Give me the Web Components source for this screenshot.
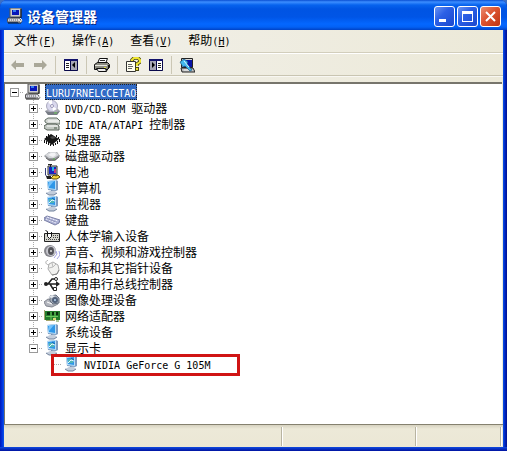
<!DOCTYPE html>
<html lang="zh-CN">
<head>
<meta charset="utf-8">
<title>设备管理器</title>
<style>
  body {
    margin: 0;
    background: #3c6fc4;
    color: #000;
    font: 12px/16px "Noto Sans CJK SC", sans-serif;
  }
</style>
</head>
<body>
<xp-window caption="设备管理器">
  <menu-bar slot="menu">
    <menu-entry key="F">文件</menu-entry>
    <menu-entry key="A">操作</menu-entry>
    <menu-entry key="V">查看</menu-entry>
    <menu-entry key="H">帮助</menu-entry>
  </menu-bar>
  <tool-bar slot="toolbar">
    <tool-group><tool-button icon="back" label="后退"></tool-button><tool-button icon="forward" label="前进"></tool-button></tool-group>
    <tool-group><tool-button icon="panel" label="显示/隐藏控制台树"></tool-button></tool-group>
    <tool-group><tool-button icon="printer" label="打印"></tool-button></tool-group>
    <tool-group><tool-button icon="help" label="帮助"></tool-button><tool-button icon="pane" label="操作窗格"></tool-button></tool-group>
    <tool-group><tool-button icon="scan" label="扫描检测硬件改动"></tool-button></tool-group>
  </tool-bar>
  <tree-item icon="computer" label="LURU7RNELCCETAO" open root selected>
    <tree-item icon="disc" label="DVD/CD-ROM 驱动器" branch></tree-item>
    <tree-item icon="ide" label="IDE ATA/ATAPI 控制器" branch></tree-item>
    <tree-item icon="cpu" label="处理器" branch></tree-item>
    <tree-item icon="disk" label="磁盘驱动器" branch></tree-item>
    <tree-item icon="battery" label="电池" branch></tree-item>
    <tree-item icon="monitor" label="计算机" branch></tree-item>
    <tree-item icon="display" label="监视器" branch></tree-item>
    <tree-item icon="keyboard" label="键盘" branch></tree-item>
    <tree-item icon="hid" label="人体学输入设备" branch></tree-item>
    <tree-item icon="speaker" label="声音、视频和游戏控制器" branch></tree-item>
    <tree-item icon="mouse" label="鼠标和其它指针设备" branch></tree-item>
    <tree-item icon="usb" label="通用串行总线控制器" branch></tree-item>
    <tree-item icon="camera" label="图像处理设备" branch></tree-item>
    <tree-item icon="network" label="网络适配器" branch></tree-item>
    <tree-item icon="monitor" label="系统设备" branch></tree-item>
    <tree-item icon="display" label="显示卡" open last>
      <tree-item icon="display" label="NVIDIA GeForce G 105M" last marked></tree-item>
    </tree-item>
  </tree-item>
  <status-bar slot="status"></status-bar>
</xp-window>

<script>
const SCREEN = `<path d="M3 1l9-1 2 1v9l-2 1-8-1z" fill="#7f9cc0"/><path d="M3 1l9-1v10l-8-1z" fill="#b5defa"/><path d="M4 2l7-1v8l-6-1z" fill="#2f97e8"/>`;
const STAND = `<path d="M7 10l4 1v2H7z" fill="#6c88ac"/><path d="M2 13l4-2h5l2 2-3 2H5z" fill="#c3cddb"/><path d="M2 13l3 2h5l3-2" stroke="#71819b" fill="none"/>`;

const ICONS = {
  computer: `<path d="M3 0h11v9H3z" fill="#ccc" stroke="#555"/><path d="M5 2h7v5H5z" fill="#0816b8"/><path d="M6 2h3v2H6z" fill="#347cf0"/><path d="M14 1v9H4" stroke="#111" fill="none"/><path d="M1 10h12l2 4H0z" fill="#d7d7df" stroke="#444"/><path d="M2 12h9" stroke="#666" stroke-dasharray="1 1"/><path d="M11 11l3 3M13 10l2 2-2 3-2-1" stroke="#e8e8e8" fill="none"/><path d="M1 15h13" stroke="#111"/>`,
  disc: `<path d="M1 11l5-3h7l3 3-3 4H4z" fill="#a8aab2"/><path d="M1 11l4 1h8l3-1-3 4H4z" fill="#777b84"/><circle cx="8" cy="6" r="5.500" fill="#d9d8ed" stroke="#aaa9bc"/><path d="M8 6L4 2a6 6 0 0 1 4-2zM8 6l5 3-4 2z" fill="#fff"/><circle cx="8" cy="6" r="1.500" fill="#fff" stroke="#9a96b8"/><path d="M10 13h3" stroke="#6fd15b"/>`,
  ide: `<path d="M4 2h9l3 3v3H4L1 6V4z" fill="#d4d8d4" stroke="#657067"/><path d="M4 5h11" stroke="#fff"/><path d="M3 8h9l3 2v4H3l-3-2v-2z" fill="#c2c8c2" stroke="#566057"/><path d="M3 10h11" stroke="#fff"/><path d="M10 12h3" stroke="#4a5b4a"/>`,
  cpu: `<path d="M7 2l8 5-7 6-8-6z" fill="#161616"/><path d="M6 5l3-1 3 2-4 1z" fill="#484848"/><path d="M0.500 8v3M2.500 9v3M4.500 10v3M6.500 12v2M9.500 12v2M11.500 11v2M13.500 9v3M15.500 7v3M2.500 4v2M4.500 2v3M12.500 3v2M14.500 5v2" stroke="#111"/>`,
  disk: `<path d="M0 8l5-4h8l3 4-5 5H5z" fill="#999ba0"/><path d="M1 7l5-3h6l3 3-5 3H5z" fill="#d5d7da"/><path d="M4 7l3-2h4l1 2-3 2z" fill="#f3f3f5"/><path d="M2 10l3 2h6l4-3" stroke="#666" fill="none"/><path d="M9 11h2" stroke="#56ae4b"/>`,
  battery: `<path d="M4 2h9v9H4z" fill="#c8c8cc" stroke="#333"/><path d="M5 3h7v7H5z" fill="#1426c0"/><path d="M8 3h2v4H8z" fill="#24b4e4"/><path d="M10 5h2v4h-2z" fill="#c03a7c"/><path d="M1.500 4v7l3 3h3" stroke="#343d79" fill="none"/><path d="M6.500 0v3M4 .5h4" stroke="#262626"/><path d="M7 14l3-3 2 1 2-1 2 2-3 2H9z" fill="#f4d43a" stroke="#5b4b06"/><path d="M2 12h5v3H3z" fill="#222"/>`,
  monitor: SCREEN + STAND + `<path d="M5 2l5-1-5 6z" fill="#74c2fb"/>`,
  display: SCREEN + STAND + `<path d="M5 3h5v4H5z" fill="#4fb5b5"/><path d="M5 7l3-3 3 1" stroke="#e8f8ff" fill="none"/><path d="M8 2l3 2" stroke="#1764b8"/>`,
  keyboard: `<path d="M0 6l3-2 13 4-1 3-4 2L0 8z" fill="#abb0d4" stroke="#7b80a6"/><path d="M3 5l11 4M2 7l10 4" stroke="#f4f5ff" stroke-dasharray="2 1"/><path d="M1 6l11 4" stroke="#7e83a7" stroke-dasharray="1 1"/>`,
  hid: `<path d="M.5 5.500h15v8H.5z" fill="#d4d4cc" stroke="#222"/><path d="M9 7.500h6M9 9.500h6M2 11.500h13" stroke="#444" stroke-dasharray="1 1"/><path d="M3.500 5.500h4v3l-2 2-2-2z" fill="#fff" stroke="#111"/><path d="M3.500 6V3.500l-2-1M7.500 4v3" stroke="#111" fill="none"/>`,
  speaker: `<ellipse cx="6" cy="7" rx="6" ry="6" fill="#85858b"/><ellipse cx="7" cy="7" rx="5" ry="5" fill="#c5c5cc"/><ellipse cx="7" cy="7" rx="3" ry="4" fill="#55555b"/><circle cx="7" cy="7" r="1" fill="#ddd"/><path d="M10 14l3-4-1-3M13 15l3-4-1-4" stroke="#a5a5e3" fill="none"/>`,
  mouse: `<path d="M4 0c-4 2-2 5 2 5" stroke="#aaa" fill="none"/><path d="M5 4l4-2 5 3 1 5-2 4-5 1-4-6z" fill="#f2f2f0" stroke="#aaa"/><path d="M5 8l4-1 3-3M8 3l1 4" stroke="#bbb" fill="none"/><path d="M8 15l5-1 2-4" stroke="#888" fill="none"/>`,
  usb: `<path d="M1 8h13M4 8l4-5h3M6 8l3 5h2" stroke="#222" stroke-width="1.500" fill="none"/><circle cx="2" cy="8" r="2" fill="#222"/><circle cx="12" cy="3" r="1.500" fill="#fff" stroke="#222"/><path d="M9.500 11.500h3v3h-3z" fill="#fff" stroke="#222"/><path d="M12 5l4 3-4 3z" fill="#222"/>`,
  camera: `<path d="M0 10l4-3 8 2 2 3-6 3-6-1z" fill="#b2b5bd" stroke="#81858f"/><path d="M6 4l6-1 3 3v5l-6 1-3-3z" fill="#a5acb7" stroke="#667080"/><path d="M4 5l4-2 3 1-3 2z" fill="#e3e7ec"/><circle cx="11" cy="8" r="3" fill="#52627b"/><circle cx="11" cy="8" r="1" fill="#b8d5ef"/><path d="M3 10l5 2" stroke="#fff"/>`,
  network: `<path d="M1 3h15v9H1z" fill="#237b2c"/><path d="M.5 2v10M2 12.500h9" stroke="#a4a46b" fill="none"/><path d="M3 4h3v3H3zM8 4h2v3H8zM12 4h2v3h-2z" fill="#092f0e"/><path d="M2 8.500h12M7 4v8M11 4v8" stroke="#68c95d"/><path d="M9 10h3v2H9z" fill="#d8d87a"/><path d="M12 13h3" stroke="#5a8e37"/>`,
  back: `<path d="M2 8l5-5v3h8v4H7v3z" fill="#aaa899"/>`,
  forward: `<path d="M15 8l-5-5v3H2v4h8v3z" fill="#aaa899"/>`,
  panel: `<path d="M1 2h14v12H1z" fill="#a6a6b5"/><path d="M2 4h5v9H2z" fill="#fff"/><path d="M1.500 2.500h13v11h-13zM7.500 3v10" stroke="#08084a" fill="none"/><path d="M1 3h14" stroke="#12126b" stroke-width="2"/><path d="M3 6.500h3M3 8.500h3M3 10.500h3" stroke="#222"/><path d="M12 5v6L9 8z" fill="#000"/>`,
  pane: `<path d="M1 2h14v12H1z" fill="#a6a6b5"/><path d="M9 4h5v9H9z" fill="#fff"/><path d="M1.500 2.500h13v11h-13zM8.500 3v10" stroke="#08084a" fill="none"/><path d="M1 3h14" stroke="#12126b" stroke-width="2"/><path d="M10 6.500h3M10 8.500h3M10 10.500h3" stroke="#222"/><path d="M4 5v6l3-3z" fill="#000"/>`,
  printer: `<path d="M5.500 1.500h8l-2 5h-8z" fill="#fff" stroke="#111"/><path d="M6 3.500h5M5 5.500h5" stroke="#333"/><path d="M.5 7.500l3-2h10l2 2v3l-2 2H.5z" fill="#8c8c82" stroke="#111"/><path d="M1 8.500h12" stroke="#e8e8e0"/><path d="M2.500 11.500h9l1 3h-8z" fill="#eee" stroke="#111"/><path d="M14.500 8v3l-2 3" stroke="#111" fill="none"/><path d="M10 10.500h2" stroke="#dfdf48"/>`,
  help: `<path d="M1.500 4.500h9v10h-9z" fill="#fffff1" stroke="#333"/><path d="M3 7.500h4M3 9.500h5M3 11.500h4" stroke="#666"/><path d="M7 4V3l2-2h4l2 2v2l-3 2v2" stroke="#4a4812" stroke-width="3.500" fill="none"/><path d="M7 4V3l2-2h4l2 2v2l-3 2v2" stroke="#eee532" stroke-width="2" fill="none"/><path d="M10 10h4v4h-4z" fill="#4a4812"/><path d="M11 11h2v2h-2z" fill="#eee532"/>`,
  scan: `<path d="M2.500 1.500h11v9h-11z" fill="#d8d8d8" stroke="#222"/><path d="M4 3h9v7H4z" fill="#0712a5"/><path d="M2 11h12l2 4H3z" fill="#c4c4c4" stroke="#222"/><path d="M5 13h8" stroke="#eee"/><path d="M1 5l4-3 4 3-1 2 5 6-2 1-5-5-2 1z" fill="#42b8ed" stroke="#17557e" stroke-width=".7"/><path d="M5 4l5 6" stroke="#d9f8ff"/>`,
};

// Latin runs are set in a 6px wide face, half of a Chinese character
const LATIN_CSS = `.latin { font: 10px/16px "DejaVu Sans Mono", monospace; white-space: pre; }`;

function mixed(text) {
  return text.replace(/[ -~]+/g, run => `<span class="latin">${run}</span>`);
}

function svg(name) {
  return `<svg width="16" height="16" viewBox="0 0 16 16" aria-hidden="true">${ICONS[name] || ""}</svg>`;
}

class XpWindow extends HTMLElement {
  connectedCallback() {
    this.attachShadow({ mode: "open" }).innerHTML = `
    <style>
      :host {
        display: flex; flex-direction: column; box-sizing: border-box; min-height: 100vh;
        padding: 0 4px 4px; border-radius: 7px 7px 0 0; overflow: hidden;
        background:
          linear-gradient(#0f4be0, #0012a0) 0 100% / 100% 4px no-repeat,
          linear-gradient(90deg, #0019b8, #0030dc 2px, #0a55ea 4px, transparent 4px) no-repeat,
          linear-gradient(270deg, #00138c, #0024c0 2px, #0a55ea 4px, transparent 4px) no-repeat #0054e3;
      }
      header {
        display: flex; align-items: center; box-sizing: border-box; height: 30px;
        margin: 0 -4px; padding: 2px 6px 0 7px;
        background: linear-gradient(#0a4fd2, #3c8eff 2px, #0763ee 5px, #0054e3 9px, #0055e6 17px, #0467ff 24px, #0361f5 27px, #0042c5 30px);
      }
      h1 { flex: 1; margin: 0 0 0 4px; color: #fff; font-size: 14px; line-height: 20px; font-weight: 700; text-shadow: 1px 1px #0a2a84; }
      .buttons { display: flex; gap: 2px; }
      button {
        width: 21px; height: 21px; padding: 0; border: 1px solid #fff; border-radius: 3px;
        background: linear-gradient(135deg, #6a94f2, #2c60e6 40%, #1b48cd);
      }
      button.close { background: linear-gradient(135deg, #ea8c70, #dc5430 45%, #be3413); }
      button svg { display: block; }
      main { flex: 1; margin: 6px 1px 0 0; border: solid #77756c; border-width: 2px 0 0 1px; background: #fff; padding-left: 1px; }
      .client { flex: 1; display: flex; flex-direction: column; background: linear-gradient(90deg, #f2f1ec, #ece9d8); }
    </style>
    <header>
      ${svg("computer")}
      <h1>${this.getAttribute("caption")}</h1>
      <div class="buttons">
        <button type="button" aria-label="最小化"><svg width="19" height="19"><path d="M4 12h7v3H4z" fill="#fff"/></svg></button>
        <button type="button" aria-label="最大化"><svg width="19" height="19"><path d="M4 4h11v11H4zM5 7v7h9V7z" fill="#fff" fill-rule="evenodd"/></svg></button>
        <button type="button" class="close" aria-label="关闭"><svg width="19" height="19"><path d="M5 5l9 9M14 5l-9 9" stroke="#fff" stroke-width="2"/></svg></button>
      </div>
    </header>
    <div class="client">
      <slot name="menu"></slot>
      <slot name="toolbar"></slot>
      <main><slot></slot></main>
      <slot name="status"></slot>
    </div>`;
  }
}

class MenuBar extends HTMLElement {
  connectedCallback() {
    this.attachShadow({ mode: "open" }).innerHTML = `
    <style>
      :host { display: flex; align-items: center; gap: 16px; height: 22px; padding-left: 10px; border-bottom: 1px solid #d2cebc; box-shadow: 0 1px #fff; margin-bottom: 1px; }
    </style>
    <slot></slot>`;
  }
}

class MenuEntry extends HTMLElement {
  connectedCallback() {
    this.attachShadow({ mode: "open" }).innerHTML = `
    <style>
      :host { display: block; }
      button { display: block; padding: 0; border: 0; background: none; color: inherit; font: inherit; white-space: nowrap; }
      u { text-underline-offset: 1px; }
      ${LATIN_CSS}
    </style>
    <button type="button"><slot></slot><span class="latin">(<u>${this.getAttribute("key")}</u>)</span></button>`;
  }
}

class ToolBar extends HTMLElement {
  connectedCallback() {
    this.attachShadow({ mode: "open" }).innerHTML = `
    <style>
      :host { display: flex; align-items: center; height: 21px; padding-left: 5px; border-bottom: 1px solid #c9c5b2; box-shadow: 0 1px #f8f7f2; }
    </style>
    <slot></slot>`;
  }
}

class ToolGroup extends HTMLElement {
  connectedCallback() {
    this.attachShadow({ mode: "open" }).innerHTML = `
    <style>
      :host { display: flex; gap: 7px; padding: 0 7px; border-left: 1px solid #cbc7b5; }
      :host(:first-child) { padding-left: 0; border-left: 0; }
    </style>
    <slot></slot>`;
  }
}

class ToolButton extends HTMLElement {
  connectedCallback() {
    this.attachShadow({ mode: "open" }).innerHTML = `
    <style>
      :host { display: block; }
      button { display: block; width: 16px; height: 18px; padding: 1px 0; border: 0; background: none; }
      svg { display: block; }
    </style>
    <button type="button" aria-label="${this.getAttribute("label")}">${svg(this.getAttribute("icon"))}</button>`;
  }
}

class TreeItem extends HTMLElement {
  connectedCallback() {
    const open = this.hasAttribute("open");
    const toggle = open || this.hasAttribute("branch")
      ? `<button type="button" aria-expanded="${open}" aria-label="展开或折叠"></button>` : "";

    this.attachShadow({ mode: "open" }).innerHTML = `
    <style>
      :host { display: block; --dots: #aaa 0 1px, transparent 1px 2px; }
      .row { display: flex; align-items: center; height: 16px; position: relative; }
      .toggle {
        box-sizing: border-box; width: 19px; height: 16px; padding: 4px 0 0 4px;
        background:
          repeating-linear-gradient(var(--dots)) 8px 0 / 1px 100% no-repeat,
          repeating-linear-gradient(90deg, var(--dots)) 8px 8px / 10px 1px no-repeat;
      }
      :host([last]) .toggle { background-size: 1px 8px, 10px 1px; }
      :host([root]) .toggle { background-size: 0 0, 10px 1px; }
      button {
        display: block; width: 9px; height: 9px; padding: 0; border: 1px solid #9a9a9a;
        background:
          linear-gradient(#000, #000) 50% 50% / 5px 1px no-repeat,
          linear-gradient(#000, #000) 50% 50% / 1px 5px no-repeat #fff;
      }
      button[aria-expanded="true"] { background-size: 5px 1px, 0 0; }
      svg { margin-right: 4px; overflow: hidden; }
      .label { padding: 0 1px; height: 16px; white-space: nowrap; }
      :host([selected]) .label { background: #316ac5; color: #fff; outline: 1px dotted #222; outline-offset: -1px; }
      :host([marked]) .row::after { content: ""; position: absolute; left: 7px; top: -2px; width: 183px; height: 16px; border: 3px solid #d01414; }
      .children { padding-left: 19px; }
      ${LATIN_CSS}
    </style>
    <div class="row">
      <div class="toggle">${toggle}</div>
      ${svg(this.getAttribute("icon"))}
      <span class="label">${mixed(this.getAttribute("label"))}</span>
    </div>
    <div class="children"><slot></slot></div>`;
  }
}

class StatusBar extends HTMLElement {
  connectedCallback() {
    this.attachShadow({ mode: "open" }).innerHTML = `
    <style>
      :host { display: flex; height: 19px; padding: 2px 2px 1px 0; border-top: 1px solid #85816f; background: linear-gradient(#d6d2c0, #ece9d8 4px, #ebe7d5); }
      span { box-sizing: border-box; border-right: 1px solid #b8b4a1; box-shadow: 1px 0 #fff; }
      .message { flex: 1; }
      .mid { width: 134px; }
      .end { width: 85px; }
    </style>
    <span class="message"></span><span class="mid"></span><span class="end"></span>`;
  }
}

customElements.define("xp-window", XpWindow);
customElements.define("menu-bar", MenuBar);
customElements.define("menu-entry", MenuEntry);
customElements.define("tool-bar", ToolBar);
customElements.define("tool-group", ToolGroup);
customElements.define("tool-button", ToolButton);
customElements.define("tree-item", TreeItem);
customElements.define("status-bar", StatusBar);
</script>
</body>
</html>
